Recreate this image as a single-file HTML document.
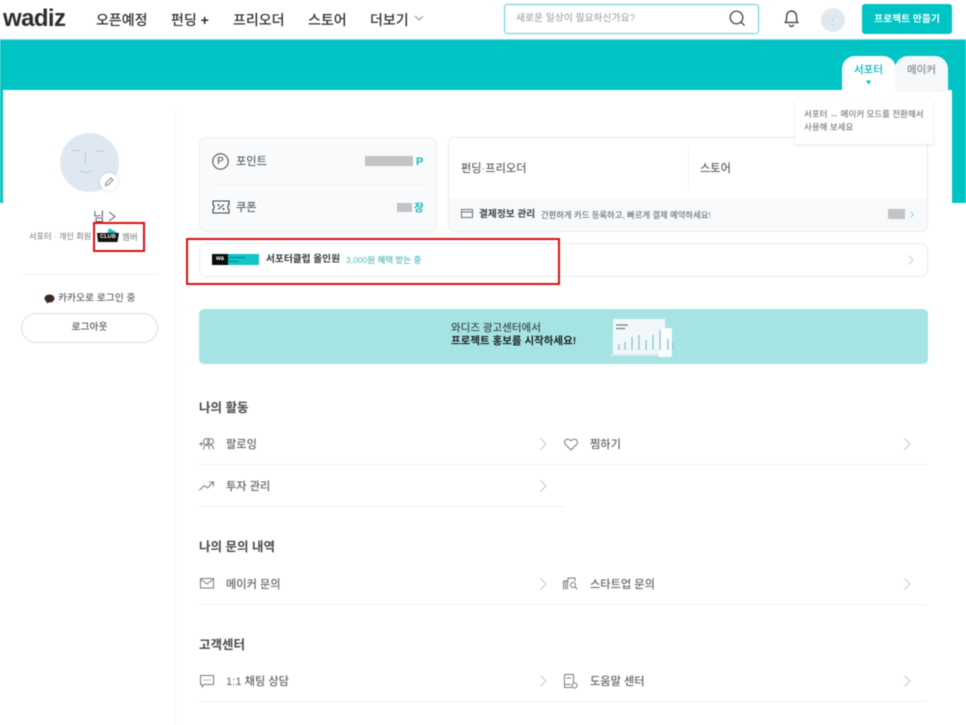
<!DOCTYPE html>
<html lang="ko">
<head>
<meta charset="utf-8">
<title>wadiz</title>
<style>
html,body{margin:0;padding:0;background:#fff}
body{position:relative;width:966px;height:725px;overflow:hidden;font-family:"Liberation Sans","Noto Sans CJK KR",sans-serif;color:#44484b}
#w{position:absolute;left:0;top:0;width:966px;height:725px;overflow:hidden;filter:blur(.5px)}
.a{position:absolute;box-sizing:border-box}
.t{position:absolute;white-space:nowrap;line-height:20px;height:20px}
.nav{font-size:14px;font-weight:500;color:#2c2f31;top:10px}
.h{font-size:12.5px;font-weight:700;color:#44484b;margin-top:1px}
.m{font-size:11.2px;font-weight:500;color:#5f6569;margin-top:1px}
.l{position:absolute;height:1px;background:#eef0f1}
svg{position:absolute;overflow:visible}
.i{fill:none;stroke:#74797c;stroke-width:1;stroke-linecap:round;stroke-linejoin:round}
</style>
</head>
<body>
<div id="w">
<!-- header -->
<div class="t" style="left:3px;top:2px;height:34px;line-height:34px;font-size:24px;font-weight:700;color:#2a2c2e;letter-spacing:-.6px">wadiz</div>
<div class="t nav" style="left:96px">오픈예정</div>
<div class="t nav" style="left:171px">펀딩 <b>+</b></div>
<div class="t nav" style="left:233px">프리오더</div>
<div class="t nav" style="left:308px">스토어</div>
<div class="t nav" style="left:370px">더보기</div>
<svg style="left:414px;top:15px" width="10" height="6"><path d="M1 1l4 4 4-4" fill="none" stroke="#8c9093"/></svg>

<div class="a" style="left:504px;top:4px;width:255px;height:30px;border:1px solid #5cd0d3;border-radius:3px"></div>
<div class="t" style="left:516px;top:9px;font-size:9.8px;font-weight:500;color:#a4a9ad">새로운 일상이 필요하신가요?</div>
<svg style="left:729px;top:10px" width="18" height="17"><circle cx="7.5" cy="7.5" r="6.3" fill="none" stroke="#33373a" stroke-width="1.2"/><path d="M12 12l3.6 3.6" stroke="#33373a" stroke-width="1.2"/></svg>
<svg style="left:783px;top:9px" width="17" height="19"><path d="M2 13.5c1.500-1 1.500-2.500 1.500-5.500 0-3.500 2-6 5-6s5 2.500 5 6c0 3 0 4.500 1.500 5.500z" fill="none" stroke="#2c2f31" stroke-width="1.2" stroke-linejoin="round"/><path d="M6.500 15.500a2 2 0 0 0 4 0" fill="none" stroke="#2c2f31" stroke-width="1.200"/></svg>
<div class="a" style="left:821px;top:8px;width:24px;height:24px;border-radius:50%;background:#e1e9f0"></div>
<svg style="left:821px;top:8px" width="24" height="24"><path d="M7 8.500h2.500M14.500 8.500h2.500M12 9v4M10 16.500h3.500" stroke="#c8d5e0" stroke-width="1" fill="none"/></svg>
<div class="a" style="left:862px;top:4px;width:90px;height:30px;background:#00c3c3;border-radius:3px"></div>
<div class="t" style="left:862px;top:10px;width:90px;text-align:center;font-size:9.8px;font-weight:700;color:#fff">프로젝트 만들기</div>

<!-- teal band -->
<div class="a" style="left:0;top:39px;width:966px;height:51px;background:#00c3c3;border-top:1px solid #7fdfe0"></div>
<div class="a" style="left:0;top:90px;width:3px;height:113px;background:#00c3c3"></div>
<div class="a" style="left:952px;top:90px;width:14px;height:113px;background:#00c3c3"></div>

<!-- tabs -->
<div class="a" style="left:842px;top:56px;width:54px;height:36px;background:#fff;border-radius:13px 13px 0 0"></div>
<div class="a" style="left:895px;top:56px;width:53px;height:36px;background:#f5f7f9;border-radius:13px 13px 0 0"></div>
<div class="t" style="left:842px;top:60px;width:53px;text-align:center;font-size:10.500px;font-weight:500;color:#00b9bb">서포터</div>
<div class="t" style="left:895px;top:60px;width:53px;text-align:center;font-size:10.500px;font-weight:500;color:#868b8f">메이커</div>
<svg style="left:866px;top:80px" width="5" height="5"><path d="M0 .5h5L2.500 4.500z" fill="#00b9bb"/></svg>

<!-- sidebar -->
<div class="a" style="left:175px;top:110px;width:1px;height:615px;background:#f1f3f4"></div>
<div class="a" style="left:60px;top:133px;width:59px;height:59px;border-radius:50%;background:#dfe8f0"></div>
<svg style="left:60px;top:133px" width="59" height="59"><path d="M13 17.500h6M37 18h6M25.500 19.500l-.5 11M21 38c3 1.800 7 1.800 10.500 0" stroke="#c3d1de" stroke-width="1.500" fill="none" stroke-linecap="round"/></svg>
<div class="a" style="left:100px;top:173px;width:18px;height:18px;border-radius:50%;background:#fff;box-shadow:0 0 3px rgba(0,0,0,.15)"></div>
<svg style="left:104px;top:177px" width="10" height="10"><path d="M1.500 8.500l.5-2.500 5-5 2 2-5 5z" fill="none" stroke="#85898c" stroke-width="1"/></svg>
<div class="t" style="left:93px;top:207px;font-size:12.500px;color:#55595c">님</div>
<svg style="left:108px;top:211px" width="8" height="11"><path d="M1 1l6 4.500L1 10" fill="none" stroke="#55595c" stroke-width="1"/></svg>
<div class="t" style="left:29px;top:227px;font-size:8.200px;font-weight:500;color:#8e9396">서포터 · 개인 회원</div>
<svg style="left:97px;top:228px" width="24" height="15"><path d="M10 6l2-6 8 4.500-2 2z" fill="#15c5c6"/><path d="M0 5h22l-1.500 9H1z" fill="#111"/></svg>
<div class="t" style="left:97px;top:232px;width:22px;height:11px;line-height:11px;text-align:center;font-size:5.500px;font-weight:700;color:#fff;letter-spacing:.2px">CLUB</div>
<div class="t" style="left:122px;top:227px;font-size:8.500px;font-weight:500;color:#8e9396">멤버</div>
<div class="a" style="left:93px;top:222px;width:52px;height:30px;border:2px solid #d81010"></div>

<div class="l" style="left:23px;top:274px;width:135px;background:#eff1f2"></div>
<svg style="left:44px;top:294px" width="11" height="10"><ellipse cx="5.500" cy="4.500" rx="5" ry="4" fill="#3a2a26"/><path d="M3 7l-.5 2.500L6 8z" fill="#3a2a26"/></svg>
<div class="t" style="left:58px;top:289px;font-size:9.800px;font-weight:500;color:#5f6569">카카오로 로그인 중</div>
<div class="a" style="left:21px;top:313px;width:137px;height:30px;border:1px solid #d9dcde;border-radius:15px"></div>
<div class="t" style="left:21px;top:318px;width:137px;text-align:center;font-size:9.800px;font-weight:500;color:#55595c">로그아웃</div>

<!-- point card -->
<div class="a" style="left:199px;top:137px;width:238px;height:95px;background:#f9fafb;border:1px solid #eceef0;border-radius:7px"></div>
<div class="l" style="left:212px;top:184px;width:212px;background:#f0f2f3"></div>
<svg style="left:212px;top:153px" width="17" height="17"><circle cx="8.500" cy="8.500" r="7.700" fill="none" stroke="#3d4144" stroke-width="1"/></svg>
<div class="t" style="left:212px;top:152px;width:17px;text-align:center;font-size:10px;color:#3d4144">P</div>
<div class="t m" style="left:236px;top:151px">포인트</div>
<div class="a" style="left:365px;top:156px;width:48px;height:10px;background:#c2c3c4"></div>
<div class="t" style="left:416px;top:152px;font-size:11px;font-weight:700;color:#1ab9bb">P</div>
<svg style="left:212px;top:200px" width="18" height="14"><path d="M1 1h16v3.500c-1.500.8-1.500 4.200 0 5V13H1V9.500c1.500-.8 1.500-4.200 0-5z" fill="none" stroke="#3d4144" stroke-width="1.100"/><path d="M6 9.500l6-5" stroke="#3d4144"/><circle cx="6.500" cy="5" r="1" fill="#3d4144"/><circle cx="11.500" cy="9" r="1" fill="#3d4144"/></svg>
<div class="t m" style="left:236px;top:197px">쿠폰</div>
<div class="a" style="left:397px;top:203px;width:15px;height:9px;background:#c2c3c4"></div>
<div class="t" style="left:414px;top:198px;font-size:10.500px;font-weight:700;color:#1ab9bb">장</div>

<!-- funding card -->
<div class="a" style="left:448px;top:137px;width:480px;height:95px;background:#fff;border:1px solid #e9ebed;border-radius:7px;overflow:hidden"><div class="a" style="left:0;top:60px;width:480px;height:35px;background:#f7f9fa"></div></div>
<div class="a" style="left:688px;top:148px;width:1px;height:40px;background:#f0f2f3"></div>
<div class="t m" style="left:461px;top:158px">펀딩·프리오더</div>
<div class="t m" style="left:700px;top:158px">스토어</div>
<svg style="left:461px;top:209px" width="12" height="10"><rect x=".5" y=".5" width="11" height="8" fill="none" stroke="#6b7073"/><path d="M.5 3h11" stroke="#6b7073"/></svg>
<div class="t" style="left:479px;top:205px;font-size:9.700px;font-weight:700;color:#3b3f42">결제정보 관리</div>
<div class="t" style="left:541px;top:205px;font-size:8.350px;font-weight:500;color:#6f7478">간편하게 카드 등록하고, 빠르게 결제 예약하세요!</div>
<div class="a" style="left:888px;top:209px;width:17px;height:10px;background:#c2c3c4"></div>
<svg style="left:910px;top:211px" width="4" height="7"><path d="M.5.5l3 3-3 3" fill="none" stroke="#8fdcdc"/></svg>

<!-- club bar -->
<div class="a" style="left:199px;top:243px;width:729px;height:34px;border:1px solid #e9ebed;border-radius:7px"></div>
<div class="a" style="left:212px;top:254px;width:16px;height:11px;background:#0b0b0b"></div>
<div class="a" style="left:228px;top:254px;width:31px;height:11px;background:#11c4c6"></div>
<div class="a" style="left:229px;top:257px;width:16px;height:1px;background:#0a7f80"></div>
<div class="a" style="left:229px;top:261px;width:9px;height:1px;background:#0a7f80"></div>
<div class="t" style="left:212px;top:254px;width:16px;height:11px;line-height:11px;text-align:center;font-size:6px;font-weight:700;color:#fff">wa</div>
<div class="t" style="left:266px;top:250px;font-size:9.700px;font-weight:700;color:#33373a">서포터클럽 올인원</div>
<div class="t" style="left:346px;top:250px;font-size:8.500px;font-weight:500;color:#59b6b6">3,000원 혜택 받는 중</div>
<svg style="left:908px;top:255px" width="6" height="10"><path d="M.5.5l4.500 4.500L.5 9.500" fill="none" stroke="#c9cccf"/></svg>
<div class="a" style="left:186px;top:238px;width:374px;height:47px;border:2px solid #d81010"></div>

<!-- banner -->
<div class="a" style="left:199px;top:309px;width:729px;height:55px;background:#a5e4e3;border-radius:5px"></div>
<div class="t" style="left:451px;top:318px;font-size:10.500px;font-weight:500;color:#3f4a4c">와디즈 광고센터에서</div>
<div class="t" style="left:451px;top:331px;font-size:10.500px;font-weight:700;color:#1d2122">프로젝트 홍보를 시작하세요!</div>
<div class="a" style="left:613px;top:319px;width:52px;height:35px;background:#f2f8f9"></div>
<div class="a" style="left:610px;top:354px;width:47px;height:2px;background:#d8ecec"></div>
<div class="a" style="left:658px;top:328px;width:14px;height:29px;background:#fbfdfd;border-radius:2px;box-shadow:0 0 1px #9fcfd0"></div>
<svg style="left:613px;top:319px" width="60" height="38"><path d="M3 6h12M3 9.500h9" stroke="#777e82" stroke-width="1.300"/><path d="M6 31v-6M12 31v-8M19 31v-13M26 31v-15M33 31v-10M40 31v-15M47 31v-20M55 31v-11M60 31v-8" stroke="#8fc9da" stroke-width="1.500"/><path d="M4 31h42" stroke="#e3eef0"/></svg>

<!-- section 1 -->
<div class="t h" style="left:199px;top:397px">나의 활동</div>
<svg style="left:199px;top:437px" width="16" height="13"><g class="i"><path d="M.5 7h3.500M2.300 5.200v3.600"/><circle cx="7.500" cy="4.500" r="3"/><circle cx="11.500" cy="4.500" r="3"/><path d="M4.500 12c.3-2.500 1.500-4 3-4s2.500.8 3 4M11 8c1.500 0 3 1.200 3.500 4"/></g></svg>
<div class="t m" style="left:226px;top:434px">팔로잉</div>
<svg style="left:540px;top:438px" width="7" height="12"><path d="M.5.5l5.500 5.500-5.500 5.500" fill="none" stroke="#c5c8ca"/></svg>
<div class="l" style="left:199px;top:464px;width:365px"></div>
<svg style="left:199px;top:481px" width="16" height="10"><g class="i"><path d="M.5 9l5-4.500 3 2.500 6-6M10.500 1h4v4"/></g></svg>
<div class="t m" style="left:226px;top:476px">투자 관리</div>
<svg style="left:540px;top:480px" width="7" height="12"><path d="M.5.5l5.500 5.500-5.500 5.500" fill="none" stroke="#c5c8ca"/></svg>
<div class="l" style="left:199px;top:506px;width:365px"></div>

<svg style="left:564px;top:438px" width="14" height="13"><path class="i" d="M7 12L1.500 6.500C0 5 .3 2.800 1.800 1.700 3.500.7 5.800 1.200 7 3c1.200-1.800 3.500-2.300 5.200-1.300C13.700 2.800 14 5 12.500 6.500z"/></svg>
<div class="t m" style="left:590px;top:434px">찜하기</div>
<svg style="left:904px;top:438px" width="7" height="12"><path d="M.5.5l5.500 5.500-5.500 5.500" fill="none" stroke="#c5c8ca"/></svg>
<div class="l" style="left:564px;top:464px;width:364px"></div>

<!-- section 2 -->
<div class="t h" style="left:199px;top:536px">나의 문의 내역</div>
<svg style="left:200px;top:578px" width="14" height="11"><g class="i"><rect x=".5" y=".5" width="13" height="9.500"/><path d="M.5 1L7 6l6.500-5"/></g></svg>
<div class="t m" style="left:226px;top:574px">메이커 문의</div>
<svg style="left:540px;top:578px" width="7" height="12"><path d="M.5.5l5.500 5.500-5.500 5.500" fill="none" stroke="#c5c8ca"/></svg>
<div class="l" style="left:199px;top:604px;width:365px"></div>
<svg style="left:563px;top:577px" width="15" height="13"><g class="i"><path d="M.5 12V4h4v8M2.500 4v8M5 4V1h7v3"/><circle cx="10" cy="8" r="2.500"/><path d="M12 10l2 2"/></g></svg>
<div class="t m" style="left:590px;top:574px">스타트업 문의</div>
<svg style="left:904px;top:578px" width="7" height="12"><path d="M.5.5l5.500 5.500-5.500 5.500" fill="none" stroke="#c5c8ca"/></svg>
<div class="l" style="left:564px;top:604px;width:364px"></div>

<!-- section 3 -->
<div class="t h" style="left:199px;top:634px">고객센터</div>
<svg style="left:200px;top:675px" width="14" height="13"><g class="i"><path d="M.5.500h13v9H4l-2 2.500v-2.500H.5z"/><path d="M4 5h.6M6.700 5h.6M9.400 5h.6"/></g></svg>
<div class="t m" style="left:226px;top:671px">1:1 채팅 상담</div>
<svg style="left:540px;top:675px" width="7" height="12"><path d="M.5.5l5.500 5.500-5.500 5.500" fill="none" stroke="#c5c8ca"/></svg>
<div class="l" style="left:199px;top:701px;width:365px"></div>
<svg style="left:564px;top:674px" width="14" height="15"><g class="i"><path d="M9.500 9V.5h-9v13h7"/><path d="M3 4h3.500M.5 10.500h6"/><circle cx="10.500" cy="11.500" r="2.500"/></g></svg>
<div class="t m" style="left:590px;top:671px">도움말 센터</div>
<svg style="left:904px;top:675px" width="7" height="12"><path d="M.5.5l5.500 5.500-5.500 5.500" fill="none" stroke="#c5c8ca"/></svg>
<div class="l" style="left:564px;top:701px;width:364px"></div>

<!-- tooltip -->
<div class="a" style="left:795px;top:98px;width:138px;height:46px;background:#fff;border-radius:2px;box-shadow:0 1px 3px rgba(0,0,0,.11)"></div>
<svg style="left:917px;top:93px" width="10" height="6"><path d="M0 6l5-5 5 5z" fill="#fff"/></svg>
<div class="t" style="left:804px;top:104px;font-size:8.500px;font-weight:500;color:#7a7f83">서포터 ↔ 메이커 모드를 전환해서</div>
<div class="t" style="left:804px;top:117px;font-size:8.500px;font-weight:500;color:#7a7f83">사용해 보세요</div>
</div>
</body>
</html>
